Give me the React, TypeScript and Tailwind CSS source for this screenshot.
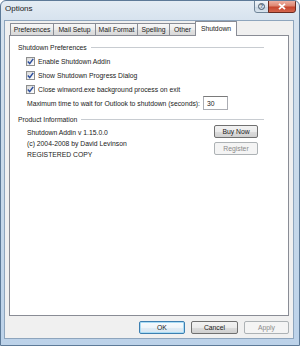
import React from "react";

function Check() {
  return (
    <span className="w-[9px] h-[9px] border border-[#8e8f8f] bg-[linear-gradient(135deg,#d8d8d8_0%,#f4f4f4_70%,#ffffff_100%)] flex items-center justify-center shrink-0">
      <svg width="7" height="7" viewBox="0 0 7 7">
        <path d="M0.8 3.6 L2.7 5.6 L6.2 0.9" stroke="#2d4f9e" strokeWidth="1.5" fill="none" />
      </svg>
    </span>
  );
}

const btnNormal =
  "border border-[#707070] rounded-[2px] bg-[linear-gradient(180deg,#f2f2f2_0%,#ebebeb_50%,#dddddd_51%,#cfcfcf_100%)] text-[#1a1a1a] flex items-center justify-center";
const btnDisabled =
  "border border-[#adb2b5] rounded-[2px] bg-[#f4f4f4] text-[#8a8a8a] flex items-center justify-center";
const btnDefault =
  "border border-[#3c7fb1] rounded-[2px] bg-[linear-gradient(180deg,#f6fbfe_0%,#eef5fa_50%,#e0ecf5_51%,#d6e6f2_100%)] shadow-[inset_0_0_0_1px_#a9dcf5] text-[#1a1a1a] flex items-center justify-center";

const tabBase =
  "h-[12px] -ml-px border border-b-0 border-[#898c95] bg-[linear-gradient(180deg,#f7f7f7_0%,#ececec_50%,#e2e2e2_51%,#d9d9d9_100%)] flex items-center justify-center rounded-t-[1px]";

export default function App() {
  return (
    <div className="w-[300px] h-[346px] bg-white">
      <div className="w-[300px] h-[346px] flex flex-col rounded-t-[6px] border border-[#5d7a98] bg-[linear-gradient(180deg,#e4ecf4_0%,#d6e2ee_6%,#c9daea_50%,#bcd2e9_100%)] font-['Liberation_Sans',Arial,sans-serif] text-[#1a1a1a] overflow-hidden">
        {/* title bar */}
        <div className="h-[19px] flex items-start">
          <span className="ml-[4px] mt-[2px] text-[8px] leading-[12px] text-[#1a1a1a]">Options</span>
          <div className="flex-1" />
          <div className="-mt-px flex mr-[3px]">
            <div className="w-[15px] h-[13px] border border-[#6f8498] rounded-bl-[3px] bg-[linear-gradient(180deg,#f1f5f9_0%,#dbe4ed_50%,#c8d5e2_51%,#d9e4ee_100%)] flex items-center justify-center">
              <span className="w-[7px] h-[7px] rounded-full border border-[#46586b] text-[5px] leading-[5px] font-bold text-[#46586b] flex items-center justify-center">?</span>
            </div>
            <div className="w-[28px] h-[13px] -ml-px border border-[#6b2b21] rounded-br-[3px] bg-[linear-gradient(180deg,#eeb0a2_0%,#dd8570_45%,#c6452d_55%,#d5664e_100%)] flex items-center justify-center">
              <svg width="8" height="7" viewBox="0 0 8 7">
                <path d="M1 0.8 L7 6.2 M7 0.8 L1 6.2" stroke="#ffffff" strokeWidth="1.8" />
              </svg>
            </div>
          </div>
        </div>

        {/* client area */}
        <div className="ml-[3px] w-[290px] h-[319px] border border-[#8ea5bd] bg-[#f0f0f0] flex flex-col text-[6.8px] leading-[11px]">
          {/* tabs */}
          <div className="h-[14px] flex items-end pl-[5px]">
            <div className={`${tabBase} ml-0 w-[44px]`}>Preferences</div>
            <div className={`${tabBase} w-[43px]`}>Mail Setup</div>
            <div className={`${tabBase} w-[43px]`}>Mail Format</div>
            <div className={`${tabBase} w-[33px]`}>Spelling</div>
            <div className={`${tabBase} w-[27px]`}>Other</div>
            <div className="relative z-10 -ml-px -mb-px h-[15px] w-[42px] border border-b-0 border-[#898c95] bg-white flex items-start justify-center pt-[1px] rounded-t-[1px]">
              Shutdown
            </div>
          </div>

          {/* panel */}
          <div className="ml-[4px] w-[280px] h-[281px] border border-[#898c95] bg-white pl-[8px] pt-[4px] flex flex-col">
            <div className="h-[14px] flex items-center mr-[24px]">
              <span>Shutdown Preferences</span>
              <div className="flex-1 h-px bg-[#c8ccd1] ml-[4px]" />
            </div>
            <div className="ml-[8px] h-[14px] flex items-center gap-[3px]">
              <Check />
              <span>Enable Shutdown Addin</span>
            </div>
            <div className="ml-[8px] h-[14px] flex items-center gap-[3px]">
              <Check />
              <span>Show Shutdown Progress Dialog</span>
            </div>
            <div className="ml-[8px] h-[14px] flex items-center gap-[3px]">
              <Check />
              <span>Close winword.exe background process on exit</span>
            </div>
            <div className="ml-[9px] h-[14px] flex items-center">
              <span>Maximum time to wait for Outlook to shutdown (seconds):</span>
              <div className="ml-[3px] w-[25px] h-[14px] border border-[#abadb3] border-t-[#7a7a7a] bg-white flex items-center pl-[3px]">
                30
              </div>
            </div>
            <div className="mt-[2px] h-[14px] flex items-center mr-[24px]">
              <span>Product Information</span>
              <div className="flex-1 h-px bg-[#c8ccd1] ml-[4px]" />
            </div>
            <div className="ml-[9px] mr-[30px] flex justify-between">
              <div className="pt-[1px] flex flex-col">
                <span>Shutdown Addin v 1.15.0.0</span>
                <span>(c) 2004-2008 by David Levinson</span>
                <span>REGISTERED COPY</span>
              </div>
              <div className="-mt-[1px] flex flex-col">
                <div className={`${btnNormal} w-[44px] h-[13px]`}>Buy Now</div>
                <div className={`${btnDisabled} mt-[4px] w-[44px] h-[13px]`}>Register</div>
              </div>
            </div>
          </div>

          {/* bottom buttons */}
          <div className="mt-[5px] flex justify-end pr-[4px] gap-[6px]">
            <div className={`${btnDefault} w-[46px] h-[13px]`}>OK</div>
            <div className={`${btnNormal} w-[47px] h-[13px]`}>Cancel</div>
            <div className={`${btnDisabled} w-[45px] h-[13px]`}>Apply</div>
          </div>
        </div>
      </div>
    </div>
  );
}
